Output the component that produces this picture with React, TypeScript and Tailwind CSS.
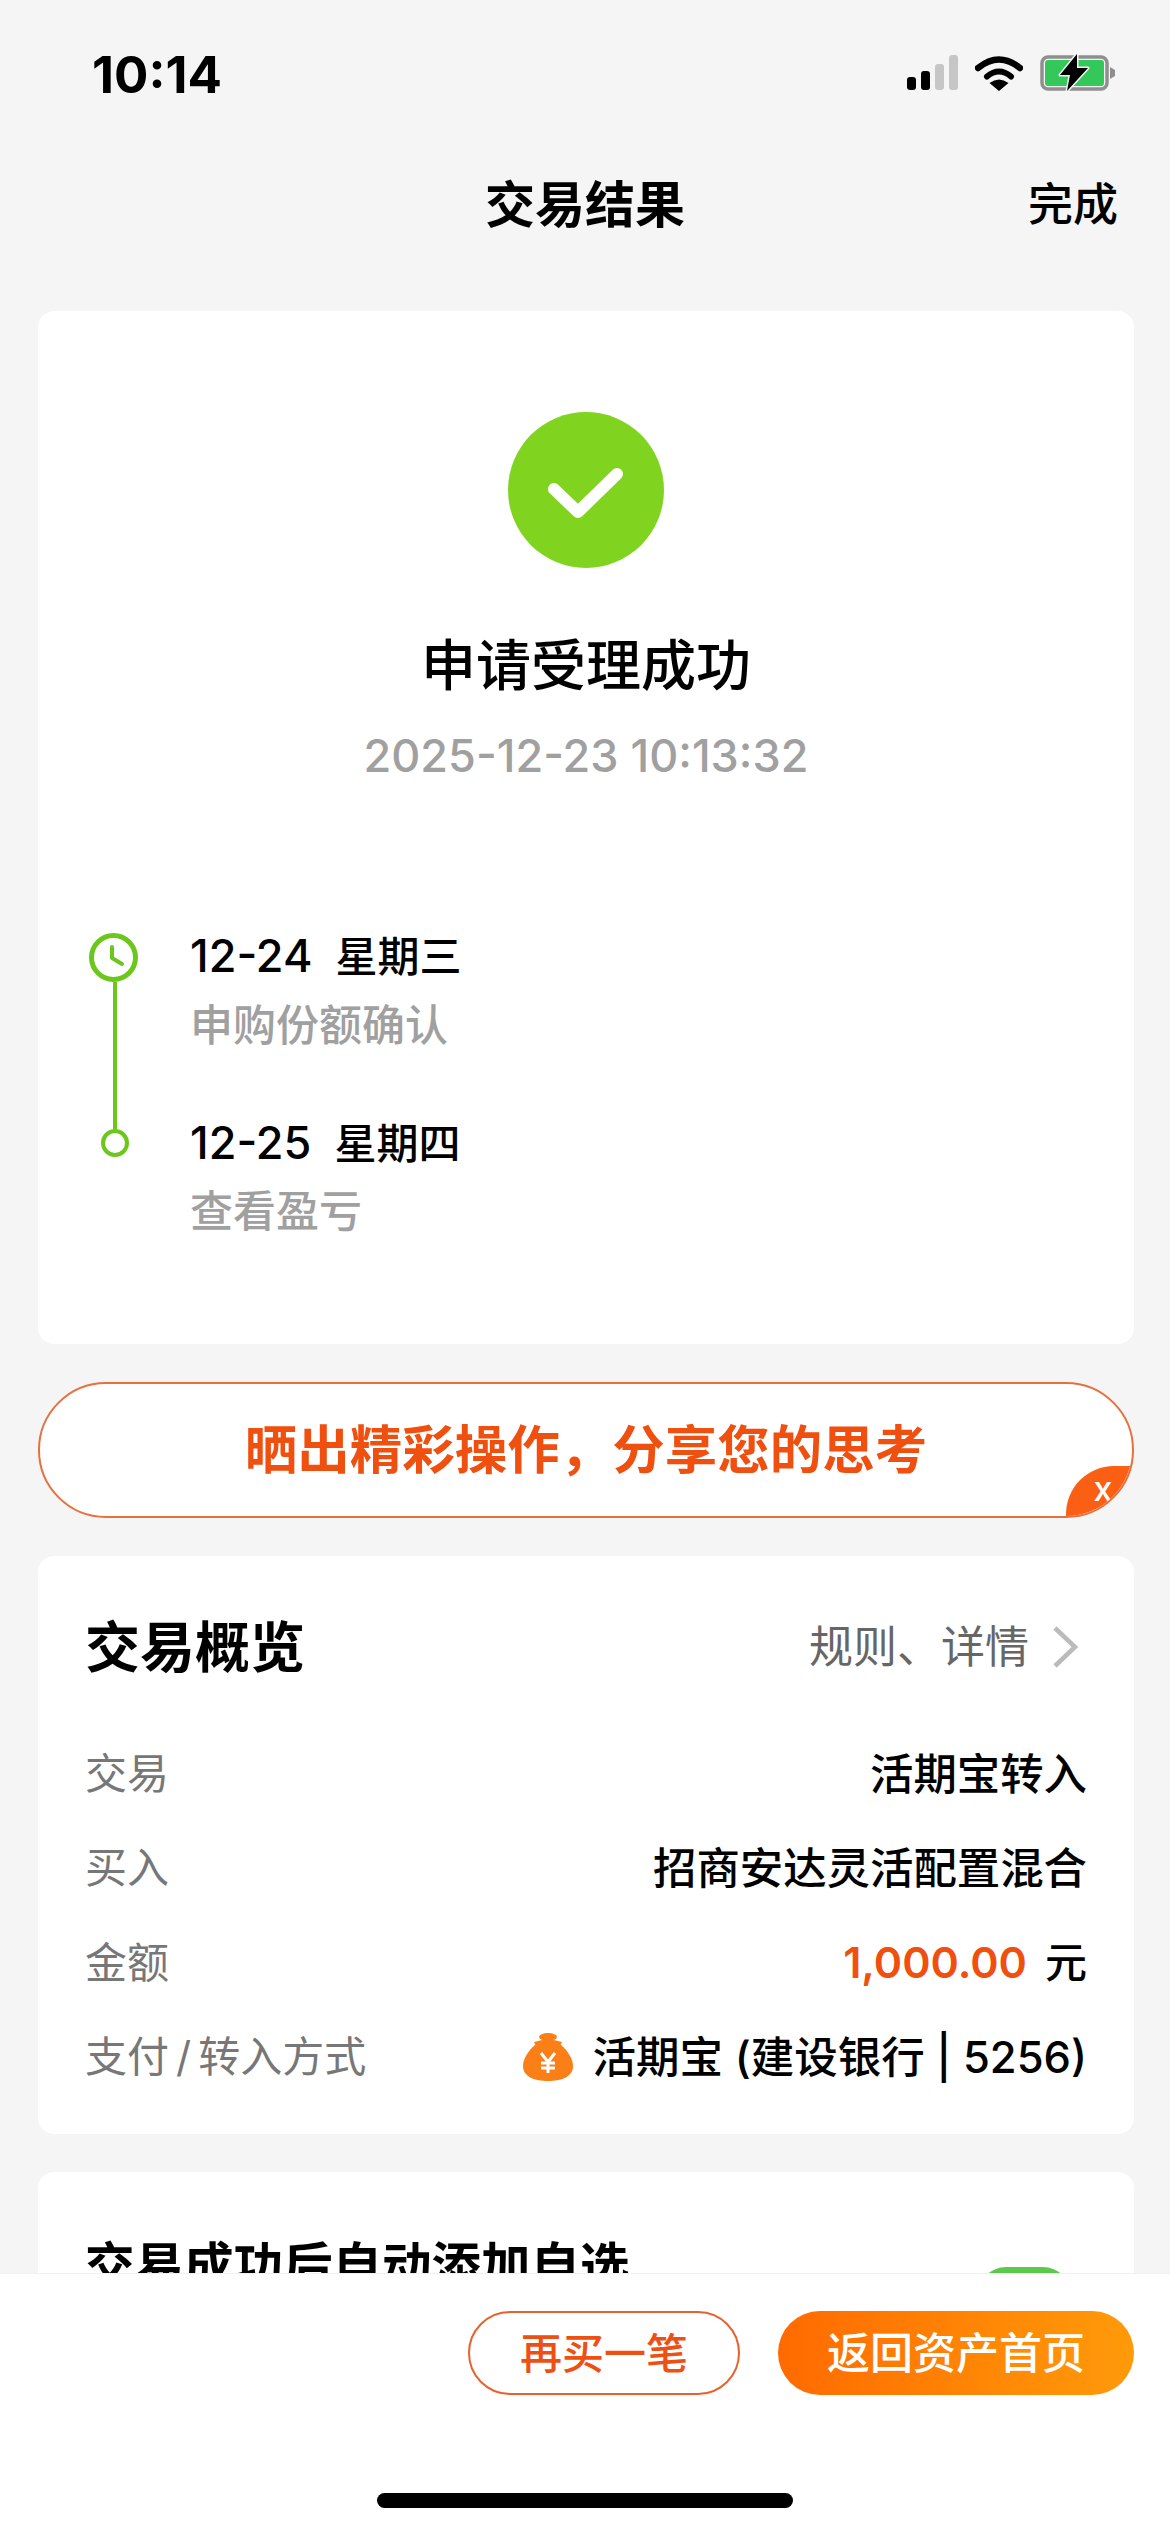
const rows = [
  { label: '交易', value: '活期宝转入' },
  { label: '买入', value: '招商安达灵活配置混合' },
];

function StatusIcons() {
  return (
    <div className="flex items-center">
      <svg width="51" height="35" viewBox="0 0 51 35">
        <rect x="0" y="22" width="9" height="13" rx="3" fill="#000" />
        <rect x="14" y="16" width="9" height="19" rx="3" fill="#000" />
        <rect x="28" y="9" width="9" height="26" rx="3" fill="#c6c6c6" />
        <rect x="42" y="0" width="9" height="35" rx="3" fill="#c6c6c6" />
      </svg>
      <svg className="ml-[17px]" width="48" height="37" viewBox="0 0 48 37">
        <path d="M3 14 Q24 -3 45 14" fill="none" stroke="#000" strokeWidth="6.5" strokeLinecap="round" />
        <path d="M12 22.5 Q24 12.5 36 22.5" fill="none" stroke="#000" strokeWidth="6" strokeLinecap="round" />
        <path d="M24 37 L14.5 29 Q24 22 33.5 29 Z" fill="#000" />
      </svg>
      <svg className="ml-[17px]" width="75" height="37" viewBox="0 0 75 37">
        <rect x="2" y="3" width="65" height="32" rx="6" fill="none" stroke="#8f8f8f" strokeWidth="3.5" />
        <rect x="5" y="6" width="59" height="26" rx="3" fill="#34c759" />
        <path d="M70 13 L75 16 V22 L70 25 Z" fill="#8f8f8f" />
        <path d="M37 0 L20 21 H30 L27 37 L48 14 H37 Z" fill="#000" stroke="#f5f5f5" strokeWidth="3" strokeLinejoin="round" paintOrder="stroke" />
      </svg>
    </div>
  );
}

function MoneyBag() {
  return (
    <svg width="50" height="48" viewBox="0 0 50 48">
      <ellipse cx="25" cy="4" rx="9" ry="4" fill="#f97f16" />
      <path d="M11 9 Q25 4 39 9 L37 13 H13 Z" fill="#f97f16" />
      <path d="M12 12 H38 C45 18 50 26 50 33 C50 44 38 48 25 48 C12 48 0 44 0 33 C0 26 5 18 12 12 Z" fill="#f97f16" />
      <path d="M18 20 L25 29 L32 20 M25 29 V40 M18 30 H32 M18 35 H32" fill="none" stroke="#fff" strokeWidth="3" />
    </svg>
  );
}

export default function App() {
  return (
    <div className="w-[1170px] h-[2532px] flex flex-col overflow-hidden bg-[#f5f5f5] text-black font-['Inter','Noto_Sans_CJK_SC',sans-serif]">
      <header className="h-[311px] shrink-0">
        <div className="h-[150px] pl-[92px] pr-[55px] pt-[54px] flex items-start justify-between">
          <span className="text-[51px] leading-[42px] font-bold">10:14</span>
          <StatusIcons />
        </div>
        <div className="grid grid-cols-3 items-center h-[110px] px-[52px]">
          <span />
          <span className="text-center text-[50px] leading-[110px] font-bold">交易结果</span>
          <span className="text-right text-[45px] leading-[110px] font-medium">完成</span>
        </div>
      </header>

      <main className="flex-1 min-h-0 overflow-hidden pl-[38px] pr-[36px] flex flex-col gap-[38px]">
        <section className="h-[1033px] shrink-0 bg-white rounded-[16px] pt-[101px]">
          <div className="flex flex-col items-center">
            <svg width="156" height="156" viewBox="0 0 156 156">
              <circle cx="78" cy="78" r="78" fill="#80d41f" />
              <path d="M46 77 L70 100 L109 62" fill="none" stroke="#fff" strokeWidth="12" strokeLinecap="round" strokeLinejoin="round" />
            </svg>
            <h1 className="mt-[62px] text-[55px] leading-[70px] font-medium">申请受理成功</h1>
            <p className="mt-[26px] text-[45px] leading-[60px] font-medium text-[#a0a0a0]">2025-12-23 10:13:32</p>
          </div>

          <div className="mt-[147px] pl-[50px] flex gap-[48px]">
            <div className="w-[54px] h-[224px] flex flex-col items-center">
              <svg className="mr-[4px] shrink-0" width="49" height="49" viewBox="0 0 49 49">
                <circle cx="24.5" cy="24.5" r="22" fill="none" stroke="#6cc71c" strokeWidth="5" />
                <path d="M23 14 V25 L33 31" fill="none" stroke="#6cc71c" strokeWidth="4" strokeLinecap="round" strokeLinejoin="round" />
              </svg>
              <div className="w-[4px] flex-1 bg-[#6cc71c]" />
              <div className="w-[28px] h-[28px] shrink-0 rounded-full border-[4px] border-[#6cc71c]" />
            </div>
            <div className="flex flex-col">
              <div className="text-[45px] leading-[46px] font-medium">
                12-24<span className="ml-[23px] text-[42px]">星期三</span>
              </div>
              <div className="mt-[22px] text-[43px] leading-[46px] font-medium text-[#a0a0a0]">申购份额确认</div>
              <div className="mt-[72px] text-[45px] leading-[46px] font-medium">
                12-25<span className="ml-[23px] text-[42px]">星期四</span>
              </div>
              <div className="mt-[21px] text-[43px] leading-[46px] font-medium text-[#a0a0a0]">查看盈亏</div>
            </div>
          </div>
        </section>

        <section className="relative h-[136px] shrink-0 overflow-hidden bg-white rounded-[68px] border-2 border-[#e8703c] flex items-center justify-center">
          <span className="text-[52.5px] font-semibold text-[#f0500f]">{'晒出精彩操作\uFF0C分享您的思考'}</span>
          <div className="absolute right-[-2px] bottom-[-2px] w-[68px] h-[52px] pl-[6px] pb-[6px] bg-[#fa5f14] rounded-tl-[48px] flex items-center justify-center text-[34px] leading-none font-medium text-white">
            x
          </div>
        </section>

        <section className="h-[578px] shrink-0 bg-white rounded-[16px] px-[47px] pt-[56px]">
          <div className="h-[70px] flex items-center justify-between">
            <h2 className="text-[55px] leading-[70px] font-bold">交易概览</h2>
            <div className="flex items-center gap-[22px] mr-[8px] text-[#666666]">
              <span className="text-[44px]">规则、详情</span>
              <svg width="28" height="46" viewBox="0 0 28 46">
                <path d="M4 4 L24 23 L4 42" fill="none" stroke="#bbbbbb" strokeWidth="4.5" />
              </svg>
            </div>
          </div>
          <div className="mt-[62px] flex flex-col gap-[34px] text-[42px] leading-[60px]">
            {rows.map((row) => (
              <div key={row.label} className="flex justify-between items-center">
                <span className="text-[#777777]">{row.label}</span>
                <span className="text-[43.4px] font-medium">{row.value}</span>
              </div>
            ))}
            <div className="flex justify-between items-center">
              <span className="text-[#777777]">金额</span>
              <span className="font-medium">
                <span className="text-[43px] font-semibold text-[#f0500f]">1,000.00</span>
                <span className="ml-[18px]">元</span>
              </span>
            </div>
            <div className="flex justify-between items-center">
              <span className="text-[#777777]">
                支付<span className="mx-[7px]">/</span>转入方式
              </span>
              <span className="flex items-center gap-[20px] font-medium">
                <MoneyBag />
                <span className="text-[43.5px]">活期宝 (建设银行 | 5256)</span>
              </span>
            </div>
          </div>
        </section>

        <section className="h-[300px] shrink-0 bg-white rounded-[16px] pl-[47px] pr-[63px] pt-[64px] flex justify-between items-start">
          <h2 className="text-[49.5px] leading-[60px] font-bold">交易成功后自动添加自选</h2>
          <div className="mt-[31px] w-[93px] h-[56px] rounded-full bg-[#5cc94c]" />
        </section>
      </main>

      <footer className="h-[259px] shrink-0 bg-white border-t border-[#f0f0f0] pt-[37px] flex flex-col">
        <div className="flex justify-end gap-[38px] pr-[36px]">
          <button className="w-[272px] h-[84px] rounded-full border-2 border-[#e8602c] bg-white text-[42px] font-medium text-[#ee5014]">
            再买一笔
          </button>
          <button className="w-[356px] h-[84px] rounded-full bg-gradient-to-r from-[#ff6a00] to-[#ff9a0a] text-[43px] font-medium text-white">
            返回资产首页
          </button>
        </div>
        <div className="mt-[98px] mx-auto w-[416px] h-[15px] rounded-full bg-black" />
      </footer>
    </div>
  );
}
